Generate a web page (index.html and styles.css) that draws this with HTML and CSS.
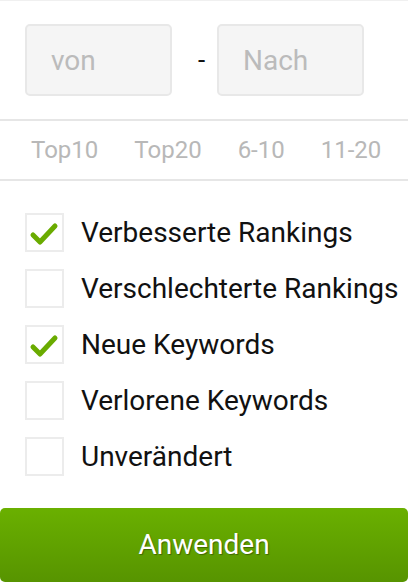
FILE: index.html
```html
<!DOCTYPE html>
<html lang="de">
<head>
<meta charset="utf-8">
<link rel="stylesheet" href="styles.css">
</head>
<body>
<div class="panel">
  <div class="range">
    <div class="field"><span class="ph">von</span></div>
    <span class="dash">-</span>
    <div class="field"><span class="ph">Nach</span></div>
  </div>
  <div class="tabs">
    <span class="tab">Top10</span>
    <span class="tab">Top20</span>
    <span class="tab">6-10</span>
    <span class="tab">11-20</span>
  </div>
  <ul class="checks">
    <li class="row"><span class="box"><svg viewBox="0 0 38 38" class="tick"><path d="M8 22 L15 29 L30 13" /></svg></span><span class="label">Verbesserte Rankings</span></li>
    <li class="row"><span class="box"></span><span class="label">Verschlechterte Rankings</span></li>
    <li class="row"><span class="box"><svg viewBox="0 0 38 38" class="tick"><path d="M8 22 L15 29 L30 13" /></svg></span><span class="label">Neue Keywords</span></li>
    <li class="row"><span class="box"></span><span class="label">Verlorene Keywords</span></li>
    <li class="row"><span class="box"></span><span class="label">Unverändert</span></li>
  </ul>
  <button class="apply">Anwenden</button>
</div>
</body>
</html>
```
FILE: styles.css
```css
html, body {
  margin: 0;
  padding: 0;
  background: #fff;
}
body {
  font-family: Roboto, "Liberation Sans", sans-serif;
  width: 408px;
  height: 582px;
  overflow: hidden;
}
.panel {
  border-top: 1px solid #f0f0f0;
}
.range {
  display: flex;
  align-items: center;
  padding: 23px 0 23px 25px;
  border-bottom: 2px solid #e6e6e6;
}
.field {
  box-sizing: border-box;
  width: 147px;
  height: 72px;
  border: 2px solid #e8e8e8;
  border-radius: 5px;
  background: #f5f5f5;
  display: flex;
  align-items: center;
  padding-left: 24px;
}
.ph {
  font-size: 28px;
  color: #bbbbbb;
}
.dash {
  font-size: 26px;
  color: #111;
  width: 45px;
  text-align: center;
  padding-left: 14px;
  box-sizing: border-box;
}
.tabs {
  display: flex;
  gap: 36px;
  padding-left: 31px;
  height: 58px;
  align-items: center;
  border-bottom: 2px solid #e6e6e6;
}
.tab {
  font-size: 24px;
  color: #b8b8b8;
}
.checks {
  list-style: none;
  margin: 0;
  padding: 32px 0 0 25px;
}
.row {
  display: flex;
  align-items: center;
  height: 39px;
  margin-bottom: 17px;
}
.row:last-child {
  margin-bottom: 0;
}
.box {
  box-sizing: border-box;
  width: 39px;
  height: 39px;
  border: 2px solid #ececec;
  background: #fff;
  flex: none;
  position: relative;
}
.tick {
  position: absolute;
  left: -2px;
  top: -2px;
  width: 38px;
  height: 38px;
}
.tick path {
  fill: none;
  stroke: #6aab00;
  stroke-width: 5;
  stroke-linecap: round;
  stroke-linejoin: round;
}
.label {
  margin-left: 17px;
  font-size: 28px;
  color: #111;
  white-space: nowrap;
}
.apply {
  display: block;
  width: 408px;
  height: 74px;
  margin-top: 32px;
  border: none;
  border-radius: 5px;
  background: linear-gradient(#6ab000, #579400);
  color: #fff;
  font-family: Roboto, "Liberation Sans", sans-serif;
  font-size: 28px;
  text-shadow: 1px 1px 1px rgba(0,0,0,0.35);
  padding: 0 0 2px 0;
}
```
